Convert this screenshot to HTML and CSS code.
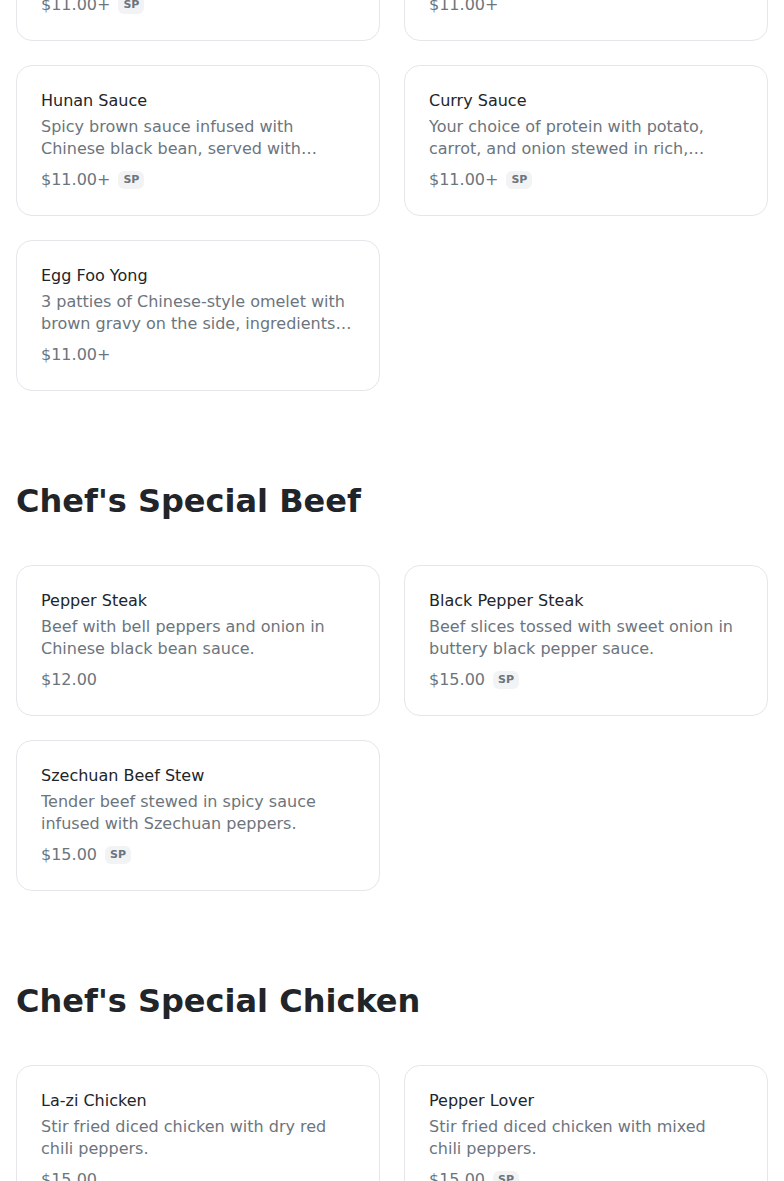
FILE: index.html
```html
<!DOCTYPE html>
<html lang="en">
<head>
<meta charset="utf-8">
<title>Menu</title>
<link rel="stylesheet" href="styles.css">
</head>
<body>
<main class="menu">
  <section class="section section-first">
    <div class="grid">
      <article class="card">
        <h3 class="item-name">Szechuan Sauce</h3>
        <p class="item-desc">Spicy and savory brown sauce with garlic, ginger and scallions, served with vegetables.</p>
        <div class="item-price"><span>$11.00+</span><span class="badge">SP</span></div>
      </article>
      <article class="card">
        <h3 class="item-name">Garlic Sauce</h3>
        <p class="item-desc">Savory brown garlic sauce with mixed vegetables.</p>
        <div class="item-price"><span>$11.00+</span></div>
      </article>
      <article class="card">
        <h3 class="item-name">Hunan Sauce</h3>
        <p class="item-desc">Spicy brown sauce infused with Chinese black bean, served with mixed vegetables.</p>
        <div class="item-price"><span>$11.00+</span><span class="badge">SP</span></div>
      </article>
      <article class="card">
        <h3 class="item-name">Curry Sauce</h3>
        <p class="item-desc">Your choice of protein with potato, carrot, and onion stewed in rich, creamy curry sauce.</p>
        <div class="item-price"><span>$11.00+</span><span class="badge">SP</span></div>
      </article>
      <article class="card">
        <h3 class="item-name">Egg Foo Yong</h3>
        <p class="item-desc">3 patties of Chinese-style omelet with brown gravy on the side, ingredients of your choice.</p>
        <div class="item-price"><span>$11.00+</span></div>
      </article>
    </div>
  </section>

  <section class="section">
    <h2 class="section-title">Chef's Special Beef</h2>
    <div class="grid">
      <article class="card">
        <h3 class="item-name">Pepper Steak</h3>
        <p class="item-desc">Beef with bell peppers and onion in Chinese black bean sauce.</p>
        <div class="item-price"><span>$12.00</span></div>
      </article>
      <article class="card">
        <h3 class="item-name">Black Pepper Steak</h3>
        <p class="item-desc">Beef slices tossed with sweet onion in buttery black pepper sauce.</p>
        <div class="item-price"><span>$15.00</span><span class="badge">SP</span></div>
      </article>
      <article class="card">
        <h3 class="item-name">Szechuan Beef Stew</h3>
        <p class="item-desc">Tender beef stewed in spicy sauce infused with Szechuan peppers.</p>
        <div class="item-price"><span>$15.00</span><span class="badge">SP</span></div>
      </article>
    </div>
  </section>

  <section class="section">
    <h2 class="section-title">Chef's Special Chicken</h2>
    <div class="grid">
      <article class="card">
        <h3 class="item-name">La-zi Chicken</h3>
        <p class="item-desc">Stir fried diced chicken with dry red chili peppers.</p>
        <div class="item-price"><span>$15.00</span></div>
      </article>
      <article class="card">
        <h3 class="item-name">Pepper Lover</h3>
        <p class="item-desc">Stir fried diced chicken with mixed chili peppers.</p>
        <div class="item-price"><span>$15.00</span><span class="badge">SP</span></div>
      </article>
    </div>
  </section>
</main>
</body>
</html>
```

FILE: styles.css
```css
* {
  box-sizing: border-box;
}

html, body {
  margin: 0;
  padding: 0;
  background: #ffffff;
}

body {
  font-family: "DejaVu Sans", "Liberation Sans", sans-serif;
  font-size: 16px;
  color: #212529;
  overflow: hidden;
}

.menu {
  padding: 0 16px;
}

.section-first {
  margin-top: -110px;
}

.section {
  padding-bottom: 86px;
}

.section-title {
  margin: 0 0 40px;
  font-size: 32px;
  font-weight: 700;
  line-height: 48px;
  color: #212529;
}

.grid {
  display: grid;
  grid-template-columns: 1fr 1fr;
  gap: 24px;
}

.card {
  border: 1px solid #e4e6e9;
  border-radius: 16px;
  padding: 23px 24px;
  background: #ffffff;
}

.item-name {
  margin: 0;
  font-size: 16px;
  font-weight: 400;
  line-height: 24px;
  color: #212529;
}

.item-desc {
  margin: 3px 0 0;
  font-size: 16px;
  line-height: 22px;
  color: #6c757d;
  display: -webkit-box;
  -webkit-line-clamp: 2;
  -webkit-box-orient: vertical;
  overflow: hidden;
  height: 44px;
}

.item-price {
  margin-top: 8px;
  display: flex;
  align-items: center;
  gap: 8px;
  font-size: 16px;
  line-height: 24px;
  color: #6c757d;
}

.badge {
  display: inline-block;
  font-size: 11px;
  font-weight: 700;
  line-height: 14px;
  padding: 2px 5px;
  border-radius: 6px;
  background: #f1f3f5;
  color: #6c757d;
}
```
